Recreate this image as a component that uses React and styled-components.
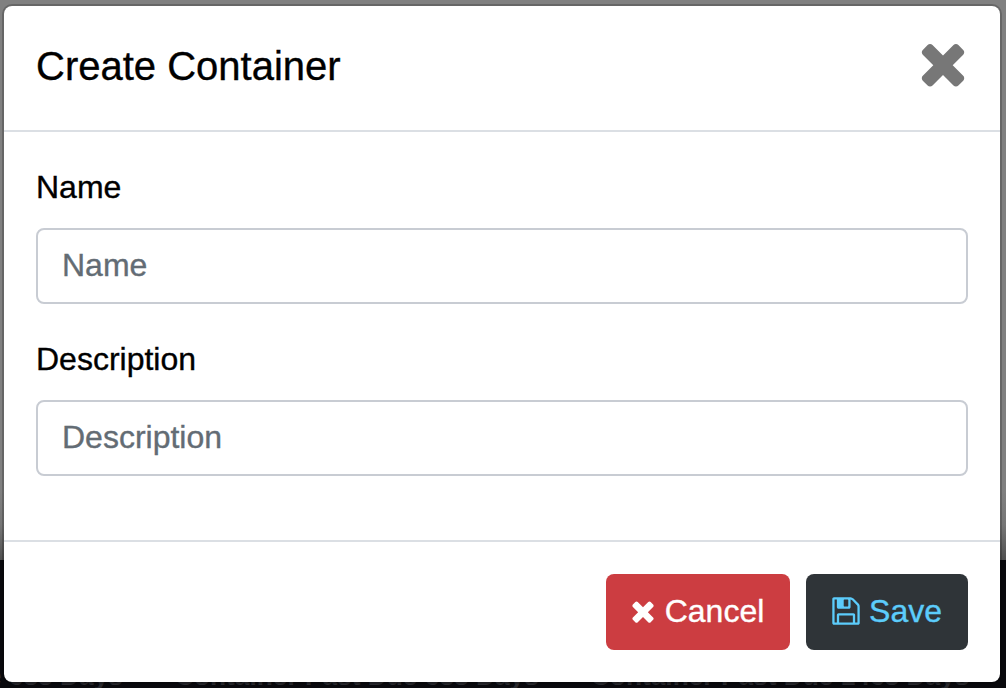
import React from 'react';
import styled, { createGlobalStyle } from 'styled-components';

const GlobalStyle = createGlobalStyle`
  *, *::before, *::after { box-sizing: border-box; }
  html, body { margin: 0; height: 100%; overflow: hidden; }
  body, input, button {
    font-family: "Liberation Sans", Arial, sans-serif;
    font-size: 32px;
    line-height: 48px;
    -webkit-text-stroke: 0.35px currentColor;
  }
`;

const Page = styled.div`
  position: relative;
  width: 1006px;
  height: 688px;
  padding: 4px 4px 4px 2px;
  overflow: hidden;
  background: linear-gradient(#808080 0, #808080 490px, #767676 525px, #505050 560px, #09090d 560px);
`;

const Backdrop = styled.div`
  position: absolute;
  left: -241px;
  bottom: -4px;
  display: flex;
  gap: 52px;
  font-size: 26.3px;
  line-height: 32px;
  font-weight: 700;
  white-space: nowrap;
  color: #29292e;
  -webkit-text-stroke: 0;
`;

const Dialog = styled.form`
  position: relative;
  width: 1000px;
  height: 680px;
  display: flex;
  flex-direction: column;
  background: #fff;
  background-clip: padding-box;
  border: 2px solid rgba(0, 0, 0, 0.2);
  border-radius: 10px;
`;

const Header = styled.header`
  display: flex;
  justify-content: space-between;
  height: 126px;
  padding: 30px 25px 0 32px;
  border-bottom: 2px solid #dbdfe4;
`;

const Title = styled.h5`
  margin: 0;
  font-size: 40px;
  line-height: 60px;
  font-weight: 400;
  color: #000;
`;

const CloseButton = styled.button`
  width: 64px;
  height: 64px;
  margin-top: -5px;
  padding: 0;
  border: 0;
  background: none;
  color: #777;
`;

const Body = styled.div`
  flex: 1;
  padding: 31px 32px;
`;

const Field = styled.div`
  margin-bottom: 31px;
`;

const Label = styled.label`
  display: block;
  margin-bottom: 17px;
  color: #000;
`;

const Input = styled.input`
  display: block;
  width: 100%;
  height: 76px;
  padding: 11px 24px 13px;
  border: 2px solid #c8ccd3;
  border-radius: 8px;
  background: #fff;
  outline: 0;
  &::placeholder { color: #636c74; opacity: 1; }
`;

const Footer = styled.footer`
  display: flex;
  justify-content: flex-end;
  gap: 16px;
  height: 142px;
  padding: 32px;
  border-top: 2px solid #dbdfe4;
`;

const Button = styled.button`
  display: flex;
  align-items: center;
  justify-content: center;
  width: ${(p) => p.$width}px;
  height: 76px;
  padding: 0 0 2px;
  border: 0;
  border-radius: 8px;
  color: ${(p) => p.$color};
  background: ${(p) => p.$background};
`;

const Glyph = styled.svg`
  display: block;
  flex: none;
  width: ${(p) => p.$size}px;
  height: ${(p) => p.$size}px;
  margin: ${(p) => p.$margin || 0};
  fill: currentColor;
`;

const TimesIcon = (props) => (
  <Glyph viewBox="0 0 1792 1792" aria-hidden="true" {...props}>
    <path d="M1490 1322q0 40-28 68l-136 136q-28 28-68 28t-68-28l-294-294-294 294q-28 28-68 28t-68-28l-136-136q-28-28-28-68t28-68l294-294-294-294q-28-28-28-68t28-68l136-136q28-28 68-28t68 28l294 294 294-294q28-28 68-28t68 28l136 136q28 28 28 68t-28 68l-294 294 294 294q28 28 28 68z" />
  </Glyph>
);

const FloppyIcon = (props) => (
  <Glyph viewBox="0 0 1792 1792" aria-hidden="true" {...props}>
    <path d="M512 1536h768v-384h-768v384zm896 0h128v-896q0-14-10-38.5t-20-34.5l-281-281q-10-10-34-20t-39-10v416q0 40-28 68t-68 28h-576q-40 0-68-28t-28-68v-416h-128v1280h128v-416q0-40 28-68t68-28h832q40 0 68 28t28 68v416zm-384-928v-320q0-13-9.500-22.500t-22.500-9.500h-192q-13 0-22.500 9.500t-9.500 22.500v320q0 13 9.500 22.500t22.500 9.500h192q13 0 22.500-9.500t9.500-22.500zm640 32v928q0 40-28 68t-68 28h-1344q-40 0-68-28t-28-68v-1344q0-40 28-68t68-28h928q40 0 88 20t76 48l280 280q28 28 48 76t20 88z" />
  </Glyph>
);

export default function App() {
  return (
    <Page>
      <GlobalStyle />
      <Backdrop aria-hidden="true">
        <span>Container Past Due 633 Days</span>
        <span>Container Past Due 633 Days</span>
        <span>Container Past Due 1463 Days</span>
      </Backdrop>
      <Dialog onSubmit={(e) => e.preventDefault()}>
        <Header>
          <Title>Create Container</Title>
          <CloseButton type="button" aria-label="Close">
            <TimesIcon $size={64} />
          </CloseButton>
        </Header>
        <Body>
          <Field>
            <Label htmlFor="name">Name</Label>
            <Input id="name" placeholder="Name" />
          </Field>
          <Field>
            <Label htmlFor="description">Description</Label>
            <Input id="description" placeholder="Description" />
          </Field>
        </Body>
        <Footer>
          <Button type="button" $width={184} $color="#fff" $background="#cc3d41">
            <TimesIcon $size={32} $margin="0 6px 0 -5px" />
            Cancel
          </Button>
          <Button type="submit" $width={162} $color="#5cccfb" $background="#2f3438">
            <FloppyIcon $size={32} $margin="0 7px 0 -2px" />
            Save
          </Button>
        </Footer>
      </Dialog>
    </Page>
  );
}
